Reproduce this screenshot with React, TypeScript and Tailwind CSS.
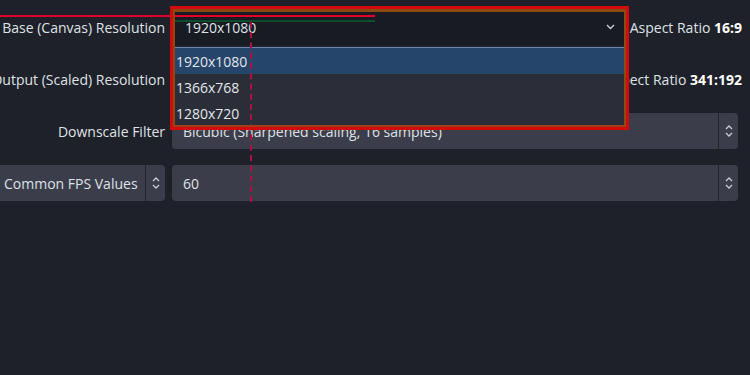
import type { ReactNode } from "react";

const font = { fontFamily: '"Open Sans", "Noto Sans", sans-serif' };

function Spinner() {
  return (
    <div className="flex h-full w-[20px] shrink-0 flex-col items-center justify-center gap-[2px] border-l border-[#23252e]">
      <svg width="8" height="5" viewBox="0 0 8 5" fill="none">
        <path d="M1 4 L4 1 L7 4" stroke="#c9ccd4" strokeWidth="1.3" />
      </svg>
      <svg width="8" height="5" viewBox="0 0 8 5" fill="none">
        <path d="M1 1 L4 4 L7 1" stroke="#c9ccd4" strokeWidth="1.3" />
      </svg>
    </div>
  );
}

function Label({ children }: { children: ReactNode }) {
  return (
    <div className="flex w-[165px] shrink-0 justify-end whitespace-nowrap">
      {children}
    </div>
  );
}

function ResolutionRow({
  label,
  value,
  ratio,
  dark,
}: {
  label: string;
  value: string;
  ratio: string;
  dark?: boolean;
}) {
  return (
    <div className="flex h-[36px] items-center">
      <Label>{label}</Label>
      <div
        className={`ml-[7px] flex h-full w-[453px] items-center justify-between rounded-[4px] pl-[13px] pr-[10px] ${
          dark ? "bg-[#191b23]" : "bg-[#3b3e4a]"
        }`}
      >
        <span>{value}</span>
        <svg width="9" height="6" viewBox="0 0 9 6" fill="none">
          <path d="M1 1 L4.5 4.5 L8 1" stroke="#c9ccd4" strokeWidth="1.4" />
        </svg>
      </div>
      <div className="flex flex-1 justify-end whitespace-nowrap pr-[8px]">
        Aspect Ratio&nbsp;<b className="font-bold text-white">{ratio}</b>
      </div>
    </div>
  );
}

function SpinBox({ value }: { value: string }) {
  return (
    <div className="ml-[7px] flex h-full w-[566px] items-center overflow-hidden rounded-[4px] bg-[#3b3e4a]">
      <span className="flex-1 pl-[11px]">{value}</span>
      <Spinner />
    </div>
  );
}

export default function App() {
  return (
    <div
      className="relative h-[375px] w-[750px] overflow-hidden bg-[#1f212a] text-[14px] text-[#dfe1e6]"
      style={font}
    >
      <div className="flex flex-col gap-[16px] pt-[9px]">
        <ResolutionRow
          label="Base (Canvas) Resolution"
          value="1920x1080"
          ratio="16:9"
          dark
        />
        <ResolutionRow
          label="Output (Scaled) Resolution"
          value="1366x768"
          ratio="341:192"
        />
        <div className="flex h-[36px] items-center">
          <Label>Downscale Filter</Label>
          <SpinBox value="Bicubic (Sharpened scaling, 16 samples)" />
        </div>
        <div className="flex h-[36px] items-center">
          <Label>
            <div className="flex h-[36px] w-[180px] shrink-0 items-center overflow-hidden rounded-[4px] bg-[#3b3e4a]">
              <span className="flex-1 pl-[19px]">Common FPS Values</span>
              <Spinner />
            </div>
          </Label>
          <SpinBox value="60" />
        </div>
      </div>

      {/* open dropdown list */}
      <div className="absolute left-[173px] top-[47px] w-[451px] border-t border-[#6f87a8] bg-[#2b2e39] text-[#e4e6ea]">
        <div className="flex h-[26px] items-center bg-[#26456a] pl-[3px]">1920x1080</div>
        <div className="flex h-[26px] items-center pl-[3px]">1366x768</div>
        <div className="flex h-[26px] items-center pl-[3px]">1280x720</div>
      </div>

      {/* highlight marks */}
      <div className="absolute left-0 top-[15px] h-[2px] w-[375px] bg-[#e0002a]" />
      <div className="absolute left-[170px] top-[20px] h-[2px] w-[205px] bg-[#0d4a2e]" />
      <div className="absolute left-[250px] top-[22px] h-[180px] border-l-2 border-dashed border-[#b01040]" />
      <div className="absolute left-[170px] top-[6px] h-[124px] w-[459px] border-[3px] border-[#d30a0a]">
        <div className="h-full w-full border-2 border-t-[3px] border-[#8a4a12] border-b-[#a0401a]" />
      </div>
    </div>
  );
}
